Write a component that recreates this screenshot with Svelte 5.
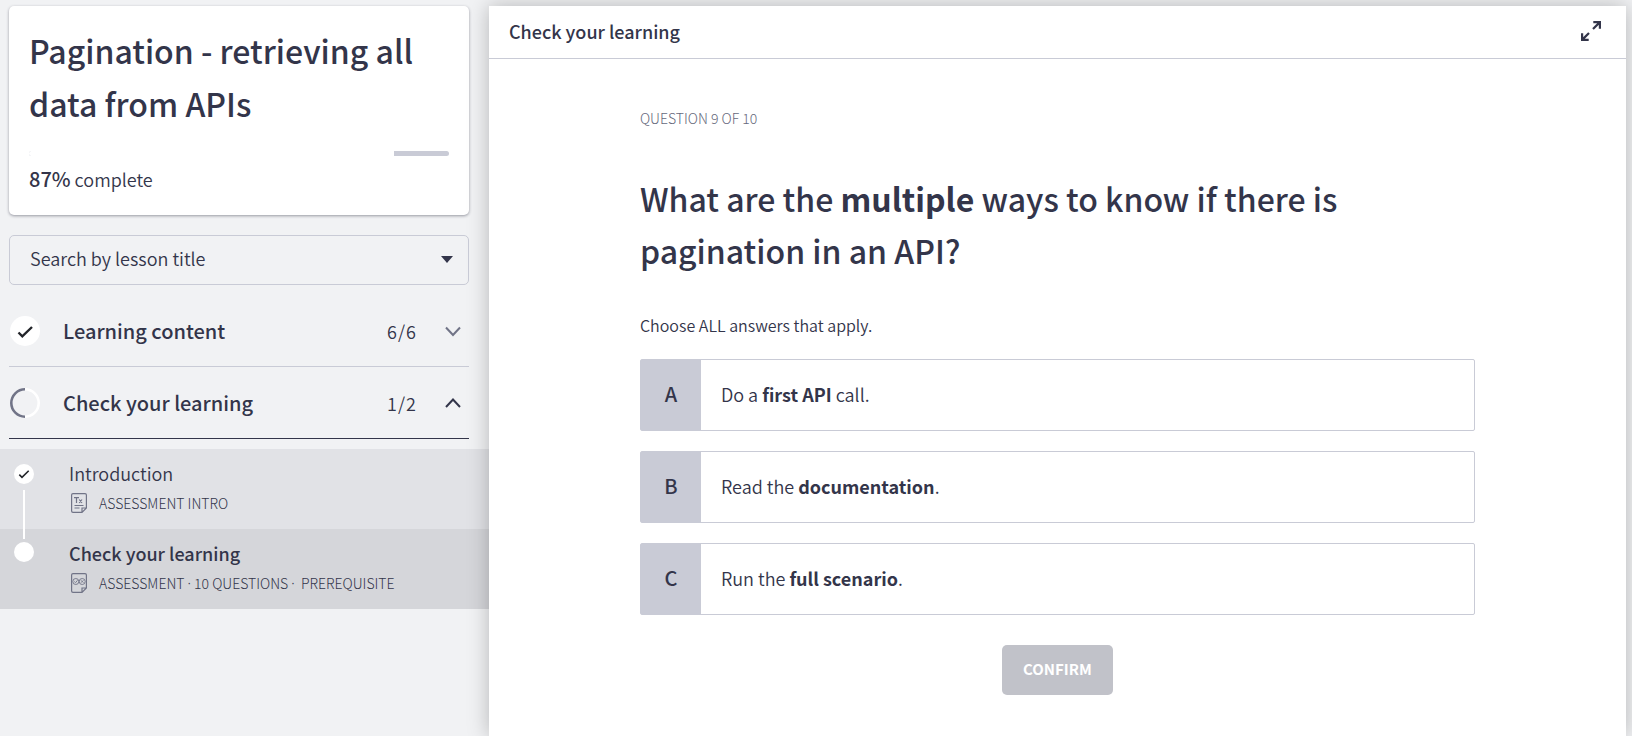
<script lang="ts">
  const progress = 87;
  let lesson = $state('');
  let open = $state([false, true]);
  let selected = $state<string[]>([]);

  const choices = [
    { key: 'A', before: 'Do a ', strong: 'first API', after: ' call.' },
    { key: 'B', before: 'Read the ', strong: 'documentation', after: '.' },
    { key: 'C', before: 'Run the ', strong: 'full scenario', after: '.' }
  ];
</script>

{#snippet chevron(up: boolean)}
  <svg class="chevron" class:up viewBox="0 0 16 16" aria-hidden="true">
    <path d={up ? 'M1 12 8 4.5 15 12' : 'M1 4.5 8 12 15 4.5'} />
  </svg>
{/snippet}

<div class="layout">
  <aside>
    <div class="inset">
      <section class="course">
        <h1>Pagination - retrieving all data from APIs</h1>
        <div class="track" role="progressbar" aria-valuenow={progress} aria-valuemin="0" aria-valuemax="100" aria-label="complete">
          <div class="fill" style="width: {progress}%"></div>
        </div>
        <p class="done"><b>{progress}%</b> complete</p>
      </section>

      <div class="search">
        <select aria-label="Search by lesson title" bind:value={lesson}>
          <option value="">Search by lesson title</option>
          <option value="intro">Introduction</option>
          <option value="check">Check your learning</option>
        </select>
        <svg class="caret" viewBox="0 0 12 7" aria-hidden="true"><path d="M0 0h12L6 7z" /></svg>
      </div>

      <button class="group" type="button" aria-expanded={open[0]}>
        <svg class="status" viewBox="0 0 30 30" aria-hidden="true">
          <circle cx="15" cy="15" r="15" fill="#fff" />
          <path d="M8.5 16.5 12.3 20.3 22 11" fill="none" stroke="#222429" stroke-width="2.4" />
        </svg>
        <span class="name">Learning content</span>
        <span class="count">6/6</span>
        {@render chevron(false)}
      </button>

      <button class="group active" type="button" aria-expanded={open[1]}>
        <svg class="status" viewBox="0 0 30 30" aria-hidden="true">
          <circle cx="15" cy="15" r="13.7" fill="none" stroke="#fff" stroke-width="2.6" />
          <path d="M15 1.3a13.7 13.7 0 0 0 0 27.4" fill="none" stroke="#717487" stroke-width="2.6" />
        </svg>
        <span class="name">Check your learning</span>
        <span class="count">1/2</span>
        {@render chevron(true)}
      </button>
    </div>

    <nav>
      <a class="lesson" href="#introduction">
        <span class="rail">
          <svg class="dot" viewBox="0 0 20 20" aria-hidden="true">
            <circle cx="10" cy="10" r="10" fill="#fff" />
            <path d="M5.3 10.7 8 13.3 14.7 6.7" fill="none" stroke="#222429" stroke-width="1.6" />
          </svg>
          <span class="link"></span>
        </span>
        <span class="text">
          <span class="title">Introduction</span>
          <span class="meta">
            <svg class="doc" viewBox="0 0 16 20" aria-hidden="true">
              <path d="M2 .6h12q1.4 0 1.4 1.4v13L11 19.4H2Q.6 19.4 .6 18V2Q.6 .6 2 .6zM11 19.4V15h4.4" />
              <path d="M3 4.7h5M5.5 4.7V10M8.2 6.5l2.8 3.5M11 6.5 8.2 10M3.5 12.5h9M3.5 15h5" />
            </svg>
            <span>ASSESSMENT INTRO</span>
          </span>
        </span>
      </a>
      <a class="lesson current" href="#check" aria-current="page">
        <span class="rail">
          <svg class="dot" viewBox="0 0 20 20" aria-hidden="true">
            <circle cx="10" cy="10" r="10" fill="#fff" />
          </svg>
        </span>
        <span class="text">
          <span class="title">Check your learning</span>
          <span class="meta">
            <svg class="doc" viewBox="0 0 16 20" aria-hidden="true">
              <path d="M2 .6h12q1.4 0 1.4 1.4v13L11 19.4H2Q.6 19.4 .6 18V2Q.6 .6 2 .6zM11 19.4V15h4.4" />
              <g class="fine">
                <circle cx="4.8" cy="8.5" r="3" />
                <circle cx="11.2" cy="8.5" r="3" />
                <path d="M3.3 8.5l1.2 1.2 2-2.4M10 7.3l2.4 2.4M12.4 7.3 10 9.7" />
              </g>
            </svg>
            <span>ASSESSMENT <i>·</i> 10 QUESTIONS&nbsp;<i>·</i>&nbsp; PREREQUISITE</span>
          </span>
        </span>
      </a>
    </nav>
  </aside>

  <main>
    <header>
      <h2>Check your learning</h2>
      <button class="expand" type="button" aria-label="Full screen">
        <svg viewBox="0 0 20 20" aria-hidden="true">
          <path d="M12.3 1.1h6.6v6.6M18.9 1.1 12 8M7.7 18.9H1.1v-6.6M1.1 18.9 8 12" />
        </svg>
      </button>
    </header>

    <form class="quiz" onsubmit={(e) => e.preventDefault()}>
      <p class="step">QUESTION 9 OF 10</p>
      <h3>What are the <b>multiple</b> ways to know if there is pagination in an API?</h3>
      <p class="hint">Choose ALL answers that apply.</p>
      <div class="choices">
        {#each choices as c (c.key)}
          <label class="choice">
            <input type="checkbox" value={c.key} bind:group={selected} />
            <span class="key">{c.key}</span>
            <span class="answer">{c.before}<b>{c.strong}</b>{c.after}</span>
          </label>
        {/each}
      </div>
      <button class="confirm" type="submit" disabled={selected.length === 0}>CONFIRM</button>
    </form>
  </main>
</div>

<style>
  :global(body) {
    background: #f1f2f4;
  }

  .layout,
  .layout * {
    box-sizing: border-box;
  }

  .layout {
    display: grid;
    grid-template-columns: minmax(0, 43fr) minmax(0, 100fr);
    min-height: 100vh;
    padding-top: 6px;
    padding-right: 6px;
    overflow: hidden;
    color: #33354a;
    font-family: 'Source Sans Pro', 'Noto Sans CJK SC', sans-serif;
    font-size: 18px;
    line-height: 28px;
  }

  h1,
  h2,
  h3,
  p {
    margin: 0;
    font-weight: 500;
  }

  button,
  select {
    color: inherit;
    font: inherit;
  }

  svg {
    display: block;
    flex: none;
  }

  b {
    font-weight: 700;
  }

  .inset {
    padding: 0 20px 0 9px;
  }

  .course {
    padding: 18px 20px 22px;
    background: #fff;
    border-radius: 5px;
    box-shadow: 0 1px 3px rgba(40, 42, 60, 0.45);
  }

  h1 {
    font-size: 32px;
    line-height: 53px;
  }

  .track {
    height: 5px;
    margin-top: 21px;
    overflow: hidden;
    background: #c9cbd6;
    border-radius: 3px;
  }

  .fill {
    height: 100%;
    background: #fff;
  }

  .done {
    margin-top: 9px;
    font-weight: 350;
  }

  .done b {
    font-size: 20px;
    font-weight: 500;
  }

  .search {
    position: relative;
    margin-top: 20px;
    margin-bottom: 10px;
  }

  select {
    display: block;
    width: 100%;
    height: 50px;
    padding: 0 20px 4px;
    appearance: none;
    background: transparent;
    border: 1px solid #c9cbd6;
    border-radius: 5px;
    font-weight: 350;
  }

  .caret {
    position: absolute;
    top: 21px;
    right: 16px;
    width: 12px;
    height: 7px;
    fill: #33354a;
    pointer-events: none;
  }

  .group {
    display: flex;
    align-items: center;
    width: 100%;
    height: 72px;
    padding: 0 8px 0 1px;
    background: none;
    border: 0;
    border-bottom: 1px solid #c9cbd6;
    text-align: left;
  }

  .group.active {
    border-color: #33354a;
  }

  .status {
    width: 30px;
    height: 30px;
  }

  .name {
    flex: 1;
    padding-left: 23px;
    font-size: 20px;
    font-weight: 500;
  }

  .count {
    font-weight: 350;
    letter-spacing: 1px;
  }

  .chevron {
    width: 16px;
    height: 16px;
    margin-left: 28px;
    fill: none;
    stroke: #717487;
    stroke-width: 2;
  }

  .chevron.up {
    stroke: #33354a;
  }

  nav {
    margin-top: 10px;
  }

  .lesson {
    display: flex;
    height: 80px;
    padding-left: 14px;
    background: #e1e2e6;
    color: inherit;
    text-decoration: none;
  }

  .lesson.current {
    background: #d5d6da;
  }

  .rail {
    display: flex;
    flex-direction: column;
    align-items: center;
    width: 20px;
    padding-top: 15px;
  }

  .current .rail {
    padding-top: 13px;
  }

  .dot {
    width: 20px;
    height: 20px;
  }

  .link {
    position: relative;
    z-index: 1;
    flex: none;
    width: 2px;
    height: 49px;
    margin-top: 6px;
    background: #fff;
  }

  .text {
    padding: 10px 0 0 35px;
  }

  .title {
    display: block;
    font-weight: 350;
  }

  .current .title {
    font-weight: 500;
  }

  .meta {
    display: flex;
    align-items: center;
    gap: 12px;
    margin-top: 6px;
    padding-left: 2px;
    font-size: 14px;
    font-weight: 300;
    line-height: 20px;
  }

  .meta i {
    font-family: 'Noto Sans', sans-serif;
    font-style: normal;
    line-height: 1;
  }

  .doc {
    width: 16px;
    height: 20px;
    fill: none;
    stroke: #717487;
    stroke-width: 1.2;
  }

  .fine {
    stroke-width: 0.9;
  }

  main {
    position: relative;
    z-index: 2;
    background: #fff;
    box-shadow: 0 0 20px rgba(0, 0, 0, 0.25);
  }

  header {
    display: flex;
    align-items: center;
    justify-content: space-between;
    height: 53px;
    padding: 0 25px 3px 20px;
    border-bottom: 1px solid #c9cbd6;
  }

  h2 {
    font-size: 18px;
    line-height: 28px;
  }

  .expand {
    padding: 0;
    background: none;
    border: 0;
  }

  .expand svg {
    width: 20px;
    height: 20px;
    fill: none;
    stroke: #33354a;
    stroke-width: 2.2;
  }

  .quiz {
    display: flex;
    flex-direction: column;
    max-width: 835px;
    margin: 0 auto;
    padding: 49px 0 40px;
  }

  .step {
    color: #66697c;
    font-size: 14px;
    font-weight: 300;
    line-height: 20px;
  }

  h3 {
    margin-top: 44px;
    font-size: 32px;
    line-height: 52px;
  }

  .hint {
    margin-top: 37px;
    font-size: 16px;
    font-weight: 350;
    line-height: 24px;
  }

  .choices {
    display: grid;
    gap: 20px;
    margin-top: 22px;
  }

  .choice {
    position: relative;
    display: flex;
    min-height: 72px;
    border: 1px solid #c9cbd6;
    border-radius: 2px;
    cursor: pointer;
  }

  .choice input {
    position: absolute;
    opacity: 0;
  }

  .key {
    display: grid;
    place-items: center;
    width: 60px;
    padding-bottom: 2px;
    background: #c9cbd6;
    font-size: 20px;
    font-weight: 500;
  }

  .answer {
    align-self: center;
    padding: 0 20px 2px;
    font-weight: 350;
  }

  .confirm {
    align-self: center;
    height: 50px;
    margin-top: 30px;
    padding: 0 21px 2px;
    background: #c1c2c9;
    border: 0;
    border-radius: 5px;
    color: #fff;
    font-size: 15px;
    font-weight: 700;
  }
</style>
